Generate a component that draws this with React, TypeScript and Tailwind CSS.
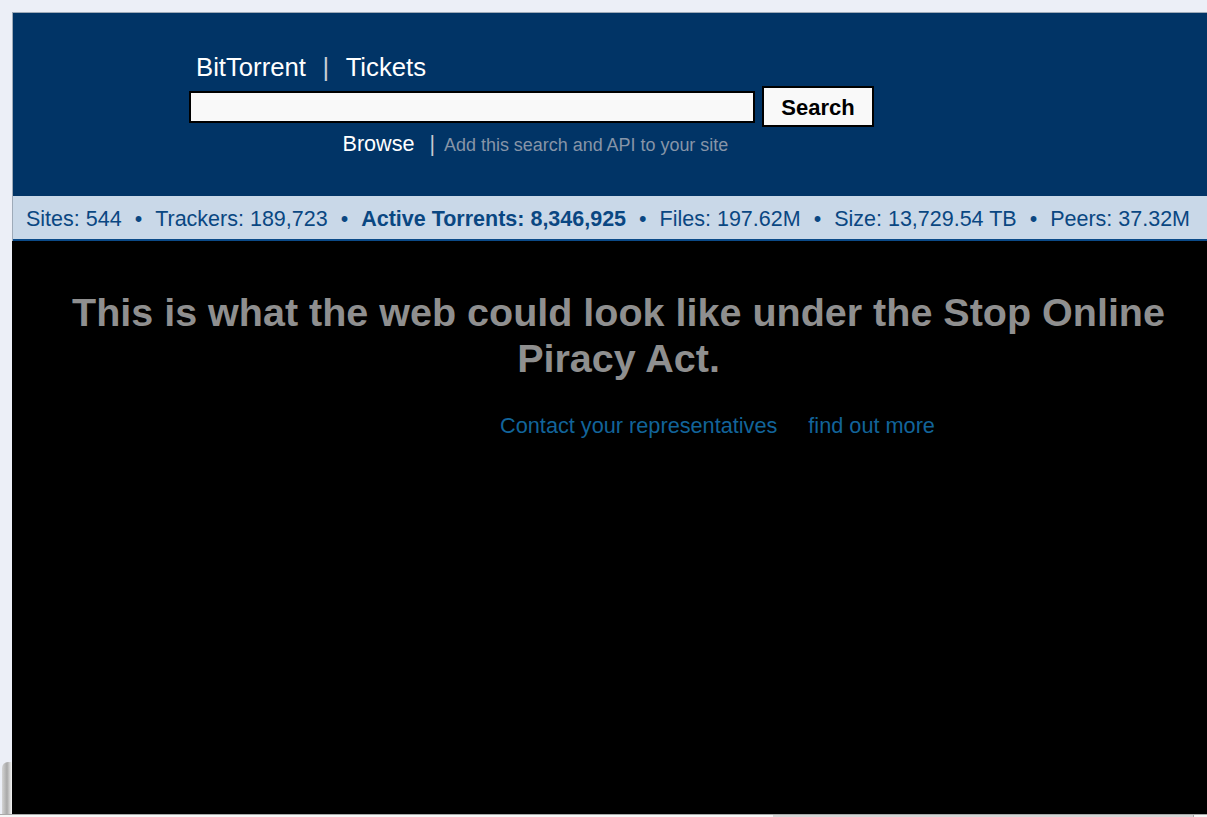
const stats = [
    { label: "Sites: 544" },
    { label: "Trackers: 189,723" },
    { label: "Active Torrents: 8,346,925", bold: true },
    { label: "Files: 197.62M" },
    { label: "Size: 13,729.54 TB" },
    { label: "Peers: 37.32M" },
];

function Header() {
    return (
        <div className="h-[183px] bg-[#013466]">
            {/* top links */}
            <div className="flex items-center pt-[40px] pl-[183px] text-[25.7px] leading-[28px] text-white">
                <span>BitTorrent</span>
                <span className="mx-[16.5px] text-[#c9ced6]">|</span>
                <span>Tickets</span>
            </div>

            {/* search form */}
            <div className="mt-[5px] flex items-center pl-[176px]">
                <input
                    type="text"
                    className="h-[32px] w-[566px] border-2 border-black bg-[#f9f9f9] px-1 text-[18px] outline-none"
                />
                <button
                    type="button"
                    className="ml-[7px] h-[41px] w-[112px] border-2 border-black bg-[#f9f9f9] pt-[1px] text-[22px] font-bold text-black"
                >
                    Search
                </button>
            </div>

            <div className="mt-[4.5px] flex items-baseline pl-[329.5px] leading-[24px]">
                <span className="text-[21.6px] text-white">Browse</span>
                <span className="ml-[15px] mr-[9px] text-[21.3px] text-[#c4c9d1]">|</span>
                <span className="text-[17.95px] text-[#8795a8]">Add this search and API to your site</span>
            </div>
        </div>
    );
}

function StatsBar() {
    return (
        <div className="flex h-[45px] items-center gap-[13px] border-b-2 border-[#0b4a88] bg-[#c9d8e8] pl-[13px] pt-[3px] text-[21.5px] whitespace-nowrap text-[#0a4782]">
            {stats.map((s, i) => (
                <div key={s.label} className="flex items-center gap-[13px]">
                    {i > 0 && <span>•</span>}
                    <span className={s.bold ? "font-bold" : ""}>{s.label}</span>
                </div>
            ))}
        </div>
    );
}

export default function App() {
    return (
        <div className="relative h-[817px] w-full overflow-hidden bg-[#eceff7] font-['Liberation_Sans',Arial,sans-serif]">
            <div className="ml-[12px] w-[1213px] pt-[12px]">
                <div className="border-l border-t border-[#9eaab8]">
                    <Header />
                    <StatsBar />
                </div>

                <div className="h-[573px] bg-black pt-[48px]">
                    <h1 className="text-center text-[39.5px] font-bold leading-[46px] text-[#8f8f8f]">
                        This is what the web could look like under the Stop Online Piracy Act.
                    </h1>
                    <div className="mt-[33px] flex justify-center gap-[31px] pl-[198px] text-[21.7px] leading-[24px] text-[#12649a]">
                        <a href="#">Contact your representatives</a>
                        <a href="#">find out more</a>
                    </div>
                </div>
            </div>

            {/* bottom window edge */}
            <div className="flex h-[3px] border-t border-[#a9a9a9]">
                <div className="w-[773px] bg-[#f6f6f6]" />
                <div className="w-[420px] bg-[#d6d6d6]" />
                <div className="flex-1 border-l border-[#a9a9a9] bg-[#f6f6f6]" />
            </div>

            <div className="absolute left-[2px] top-[762px] h-[52px] w-[10px] rounded-tl-[6px] bg-gradient-to-r from-[#d4d4d4] via-[#a8a8a8] to-[#f4f4f4]" />
        </div>
    );
}
